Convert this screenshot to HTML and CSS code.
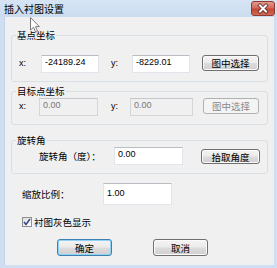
FILE: index.html
```html
<!DOCTYPE html>
<html>
<head>
<meta charset="utf-8">
<link rel="stylesheet" href="styles.css">
</head>
<body>
<div class="window">
  <div class="titlebar">
    <span class="title">插入衬图设置</span>
    <span class="close">
      <svg width="22" height="13" viewBox="0 0 22 13">
        <path d="M8 3.5 L14 9.5 M14 3.5 L8 9.5" stroke="#5a2424" stroke-width="3.6" stroke-linecap="square"/>
        <path d="M8 3.5 L14 9.5 M14 3.5 L8 9.5" stroke="#ffffff" stroke-width="2" stroke-linecap="square"/>
      </svg>
    </span>
  </div>
  <div class="client">
    <fieldset class="group g1">
      <legend>基点坐标</legend>
      <div class="row">
        <span class="lbl lx">x:</span>
        <input class="field w58" value="-24189.24">
        <span class="lbl ly">y:</span>
        <input class="field w58" value="-8229.01">
        <button class="btn pick">图中选择</button>
      </div>
    </fieldset>
    <fieldset class="group g2">
      <legend>目标点坐标</legend>
      <div class="row">
        <span class="lbl lx2">x:</span>
        <input class="field dis w59" value="0.00" disabled>
        <span class="lbl ly2">y:</span>
        <input class="field dis w63" value="0.00" disabled>
        <button class="btn pick2" disabled>图中选择</button>
      </div>
    </fieldset>
    <fieldset class="group g3">
      <legend>旋转角</legend>
      <div class="row">
        <span class="lbl lang">旋转角（度）：</span>
        <input class="field w69" value="0.00">
        <button class="btn pick3">拾取角度</button>
      </div>
    </fieldset>
    <div class="scale">
      <span class="lbl lscale">缩放比例：</span>
      <input class="field tall w69" value="1.00">
    </div>
    <div class="check">
      <span class="box">
        <svg width="8" height="8" viewBox="0 0 8 8"><path d="M1 4 L3 6.5 L7 1" fill="none" stroke="#3d4f8a" stroke-width="1.6"/></svg>
      </span>
      <span class="ctext">衬图灰色显示</span>
    </div>
    <div class="actions">
      <button class="btn act default">确定</button>
      <button class="btn act">取消</button>
    </div>
  </div>
  <svg class="cursor" width="12" height="17" viewBox="0 0 12 17">
    <path d="M0.5 0.5 L0.5 13 L3.5 10.3 L5.7 15.2 L7.6 14.3 L5.5 9.6 L9.3 9.6 Z" fill="#ffffff" stroke="#7a7a7a" stroke-width="1"/>
  </svg>
</div>
</body>
</html>
```

FILE: styles.css
```css
* { box-sizing: border-box; }
body {
  margin: 0;
  background: #ffffff;
  font-family: "Noto Sans CJK SC", "Liberation Sans", sans-serif;
  font-size: 9.5px;
  color: #000;
}
.window {
  position: relative;
  width: 277px;
  height: 268px;
  background: #cfdff1;
  display: flex;
  flex-direction: column;
}
.titlebar {
  height: 17px;
  display: flex;
  align-items: center;
  justify-content: space-between;
  padding: 0 2px 0 4px;
  background: linear-gradient(#d6e4f4, #cbdcf0);
}
.title {
  font-size: 10px;
  line-height: 12px;
  margin-top: 0;
}
.close {
  width: 24px;
  height: 15px;
  margin-top: -1px;
  border: 1px solid #8c3a32;
  border-radius: 3px;
  background: linear-gradient(#e39a8c 0%, #d4695a 45%, #c24734 55%, #cf6a52 100%);
  display: flex;
  align-items: center;
  justify-content: center;
}
.close svg { display: block; }
.client {
  flex: 1;
  margin: 0 3px 3px 4px;
  background: #f0f0f0;
  padding: 0 6px;
  border-left: 1px solid #c3d3e6;
}
.group {
  margin: 0;
  border: 1px solid #d8e0e5;
  border-radius: 3px;
  padding: 1px 0 8px 7px;
  min-inline-size: 0;
}
.group legend {
  padding: 0 1px;
  margin-left: -3px;
  line-height: 12px;
  font-size: 9.5px;
}
.g1 { margin-top: 12px; padding-top: 14px; }
.g2 { margin-top: 3px; }
.g3 { margin-top: 9px; }
.row {
  display: flex;
  align-items: center;
  height: 18px;
}
.lbl {
  flex: none;
  line-height: 12px;
}
.lx, .ly, .lx2, .ly2 {
  font-family: "Liberation Sans", "DejaVu Sans", sans-serif;
  font-size: 9px;
  margin-top: -3px;
}
.lx { width: 22px; }
.ly { width: 21px; margin-left: 12px; }
.lx2 { width: 20px; }
.ly2 { width: 19px; margin-left: 13px; }
.lang { width: 75px; margin-left: 20px; }
.field {
  flex: none;
  height: 18px;
  margin: 0;
  padding: 0 0 4px 3px;
  border: 1px solid #e1e4ea;
  border-top-color: #b9bdc4;
  background: #ffffff;
  font-family: "Liberation Sans", "DejaVu Sans", sans-serif;
  font-size: 9px;
  color: #000;
  outline: none;
}
.field.dis {
  background: #f0f0f0;
  border-color: #d3d6db;
  border-top-color: #c3c6cc;
  color: #777;
}
.field.tall { height: 22px; padding-bottom: 3px; }
.w58 { width: 58px; }
.w59 { width: 59px; }
.w63 { width: 63px; }
.w69 { width: 69px; }
.btn {
  flex: none;
  margin: 0;
  padding: 0;
  border: 1px solid #707070;
  border-radius: 3px;
  background: linear-gradient(#f3f3f3 0%, #ebebeb 48%, #dddddd 52%, #cfcfcf 100%);
  box-shadow: inset 0 0 0 1px #fbfbfb;
  font-family: "Noto Sans CJK SC", sans-serif;
  font-size: 9.5px;
  line-height: 12px;
  color: #000;
}
.btn:disabled {
  border-color: #adb2b5;
  background: #f4f4f4;
  box-shadow: none;
  color: #8a8a8a;
}
.pick { width: 57px; height: 16px; margin-left: 12px; margin-top: -2px; }
.pick2 { width: 56px; height: 16px; margin-left: 10px; margin-top: -2px; }
.pick3 { width: 59px; height: 15px; margin-left: 18px; margin-top: 1px; }
.scale {
  display: flex;
  align-items: center;
  margin: 9px 0 0 11px;
}
.lscale { width: 81px; margin-top: -1px; }
.check {
  display: flex;
  align-items: center;
  height: 12px;
  margin: 11px 0 0 11px;
}
.box {
  width: 10px;
  height: 10px;
  border: 1px solid #8f8f8f;
  background: linear-gradient(135deg, #dcdcdc, #ffffff);
  display: flex;
  align-items: center;
  justify-content: center;
}
.box svg { display: block; }
.ctext { margin-left: 2px; line-height: 12px; }
.actions {
  display: flex;
  gap: 41px;
  margin: 11px 0 0 46px;
}
.act { width: 55px; height: 17px; }
.act.default {
  border-color: #3c7fb1;
  box-shadow: inset 0 0 0 1px #8fd3f6;
}
.cursor {
  position: absolute;
  left: 30px;
  top: 17px;
}
```
